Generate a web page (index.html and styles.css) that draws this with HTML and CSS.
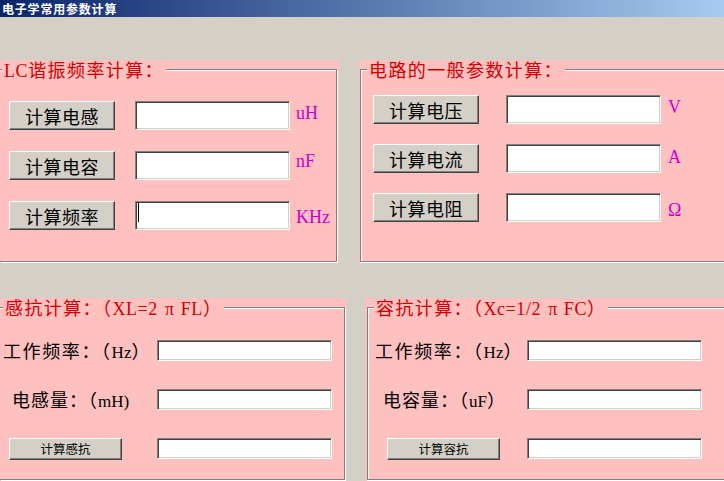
FILE: index.html
```html
<!DOCTYPE html>
<html lang="zh-CN">
<head>
<meta charset="utf-8">
<title>电子学常用参数计算</title>
<link rel="stylesheet" href="styles.css">
</head>
<body>
<div class="titlebar">电子学常用参数计算</div>

<div class="row row-top">
  <div class="frame frame-tl">
    <fieldset class="group open-left">
      <legend class="cap cap-tl"><span class="lat">LC</span>谐振频率计算：</legend>
      <div class="calc calc-tl">
        <button class="btn">计算电感</button>
        <input class="field" type="text">
        <span class="unit m4">uH</span>

        <button class="btn">计算电容</button>
        <input class="field" type="text">
        <span class="unit m2">nF</span>

        <button class="btn">计算频率</button>
        <span class="caretbox"><input class="field" type="text"></span>
        <span class="unit m8">KHz</span>
      </div>
    </fieldset>
  </div>

  <div class="frame frame-tr">
    <fieldset class="group open-right">
      <legend class="cap">电路的一般参数计算：</legend>
      <div class="calc calc-tr">
        <button class="btn">计算电压</button>
        <input class="field" type="text">
        <span class="unit m4">V</span>

        <button class="btn">计算电流</button>
        <input class="field" type="text">
        <span class="unit m5">A</span>

        <button class="btn">计算电阻</button>
        <input class="field" type="text">
        <span class="unit m9">Ω</span>
      </div>
    </fieldset>
  </div>
</div>

<div class="row row-bottom">
  <div class="frame frame-bl">
    <fieldset class="group open-left">
      <legend class="cap cap-bl">感抗计算：（<span class="lat">XL=2</span><span class="lat pi">π</span><span class="lat">FL</span>）</legend>
      <div class="form form-bl">
        <span class="lbl i1">工作频率：（<span class="lat">Hz</span>）</span>
        <input class="field small" type="text">
        <span class="lbl i2">电感量：（<span class="lat">mH)</span></span>
        <input class="field small" type="text">
        <button class="btn-s i3">计算感抗</button>
        <input class="field small" type="text">
      </div>
    </fieldset>
  </div>

  <div class="frame frame-br">
    <fieldset class="group open-right">
      <legend class="cap">容抗计算：（<span class="lat">Xc=1/2</span><span class="lat pi">π</span><span class="lat">FC</span>）</legend>
      <div class="form form-br">
        <span class="lbl j1">工作频率：（<span class="lat">Hz</span>）</span>
        <input class="field small" type="text">
        <span class="lbl j2">电容量：（<span class="lat">uF</span>）</span>
        <input class="field small" type="text">
        <button class="btn-s j3">计算容抗</button>
        <input class="field small" type="text">
      </div>
    </fieldset>
  </div>
</div>
</body>
</html>
```

FILE: styles.css
```css
html, body {
  margin: 0;
  padding: 0;
  overflow: hidden;
}

body {
  width: 724px;
  height: 481px;
  background: #D4D0C8;
  font-family: "Noto Sans CJK SC", sans-serif;
  color: #000;
}

.titlebar {
  height: 17px;
  padding-left: 2px;
  background: linear-gradient(to right, #0A246A, #A6CAF0);
  color: #fff;
  font-weight: bold;
  font-size: 12px;
  line-height: 17px;
  letter-spacing: 0.8px;
  white-space: nowrap;
}

.row {
  display: flex;
}

.row-top {
  margin-top: 43px;
  height: 203px;
}

.row-bottom {
  margin-top: 35px;
  height: 183px;
}

.frame {
  flex: none;
  display: flex;
  box-sizing: border-box;
  background: #FFC0C0;
}

.frame-tl { width: 339px; margin-right: 20px; padding: 0 2px 1px 0; }
.frame-tr { width: 365px; padding: 0 0 1px 1px; }
.frame-bl { width: 346px; margin-right: 19px; padding: 0 1px 1px 0; }
.frame-br { width: 359px; padding: 0 0 1px 2px; }

.group {
  flex: 1;
  min-width: 0;
  margin: 0;
  padding: 0;
  border: 1px solid #808080;
  box-shadow: inset 1px 1px 0 #fff, 1px 1px 0 #fff;
}

.group.open-left {
  border-left: none;
  box-shadow: inset 0 1px 0 #fff, 1px 1px 0 #fff;
}

.group.open-right {
  border-right: none;
  box-shadow: inset 1px 1px 0 #fff, 0 1px 0 #fff;
}

.cap {
  margin-left: 6px;
  padding: 0 2px;
  background: #FFC0C0;
  color: #D00000;
  font-size: 18px;
  line-height: 19px;
  letter-spacing: 1.4px;
  white-space: nowrap;
}

.cap-tl { margin-left: 2px; }
.cap-bl { margin-left: 3px; }

.lat {
  font-family: "Liberation Serif", serif;
  font-size: 17px;
  line-height: 0;
  letter-spacing: 0;
}

.cap .lat {
  font-size: 18px;
  letter-spacing: 0.6px;
}

.cap .pi {
  margin: 0 6px 0 7px;
}

/* top groups */
.calc {
  display: grid;
  grid-auto-rows: 29px;
  align-items: start;
}

.calc-tl {
  padding: 22px 0 0 9px;
  grid-template-columns: 126px 161px 1fr;
  row-gap: 21px;
}

.calc-tr {
  padding: 16px 0 0 12px;
  grid-template-columns: 133px 162px 1fr;
  row-gap: 20px;
}

.btn {
  width: 106px;
  height: 29px;
  margin: 0;
  padding: 0;
  box-sizing: border-box;
  background: #D4D0C8;
  border: 1px solid;
  border-color: #fff #404040 #404040 #fff;
  box-shadow: inset -1px -1px 0 #808080;
  font-family: "Noto Sans CJK SC", sans-serif;
  font-size: 18px;
  line-height: 1;
  letter-spacing: 0.5px;
  color: #000;
}

.field {
  display: block;
  width: 155px;
  height: 29px;
  margin: 0;
  padding: 0;
  box-sizing: border-box;
  background: #fff;
  border: 1px solid;
  border-color: #808080 #fff #fff #808080;
  box-shadow: inset 1px 1px 0 #404040, inset -1px -1px 0 #D4D0C8;
  outline: none;
}

.caretbox {
  position: relative;
  display: block;
  width: 155px;
}

.caretbox::after {
  content: "";
  position: absolute;
  left: 3px;
  top: 2px;
  width: 1px;
  height: 19px;
  background: #000;
}

.unit {
  font-family: "Liberation Serif", serif;
  font-size: 18px;
  line-height: 17px;
  color: #CC00CC;
  white-space: nowrap;
}

.m2 { margin-top: 2px; }
.m4 { margin-top: 4px; }
.m5 { margin-top: 5px; }
.m8 { margin-top: 8px; }
.m9 { margin-top: 9px; }

/* bottom groups */
.form {
  display: grid;
  grid-auto-rows: 22px;
  row-gap: 27px;
  padding-top: 23px;
  align-items: start;
}

.form-bl { grid-template-columns: 157px 175px; }
.form-br { grid-template-columns: 159px 175px; }

.field.small {
  width: 175px;
  height: 21px;
}

.lbl {
  font-size: 18px;
  line-height: 20px;
  letter-spacing: 1.6px;
  white-space: nowrap;
}

.i1 { margin-left: 3px; }
.i2 { margin-left: 12px; letter-spacing: 1px; }
.i3 { margin-left: 9px; }
.j1 { margin-left: 7px; }
.j2 { margin-left: 15px; letter-spacing: 1px; }
.j3 { margin-left: 19px; }

.btn-s {
  width: 113px;
  height: 22px;
  margin-top: 0;
  margin-bottom: 0;
  margin-right: 0;
  padding: 0;
  box-sizing: border-box;
  background: #D4D0C8;
  border: 1px solid;
  border-color: #fff #404040 #404040 #fff;
  box-shadow: inset -1px -1px 0 #808080;
  font-family: "Noto Sans CJK SC", sans-serif;
  font-size: 12.5px;
  line-height: 1;
  color: #000;
}
```
